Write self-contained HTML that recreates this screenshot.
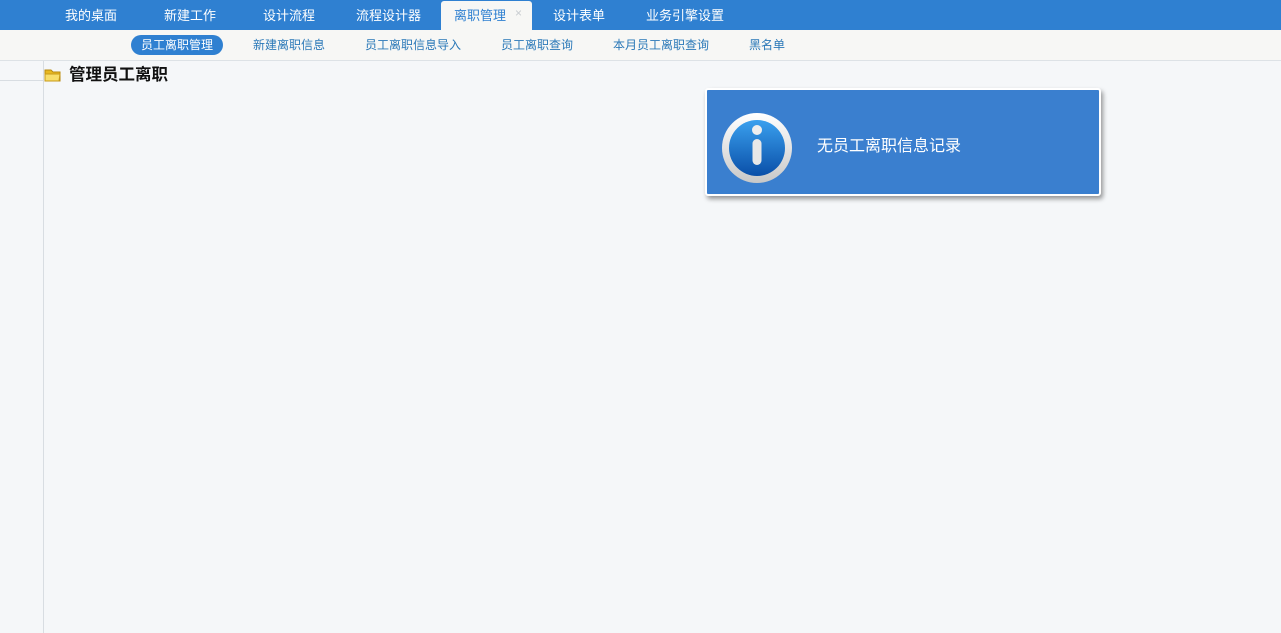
<!DOCTYPE html>
<html><head><meta charset="utf-8"><style>
*{margin:0;padding:0;box-sizing:border-box}
body{width:1281px;height:633px;overflow:hidden;background:#f5f7f9;font-family:"Liberation Sans","Noto Sans CJK SC",sans-serif;position:relative}
.top{position:absolute;left:0;top:0;width:1281px;height:30px;background:#2f80d1}
.top span{position:absolute;top:5px;font-size:13px;color:#fff}
.tab{position:absolute;left:441px;top:1px;width:91px;height:29px;background:#f7f7f5;border-radius:3px 3px 0 0}
.sub{position:absolute;left:0;top:30px;width:1281px;height:31px;background:#f7f7f5;border-bottom:1px solid #dde2e6}
.pill{position:absolute;left:131px;top:35px;width:92px;height:20px;border-radius:10px;background:#2f80d1}
.left{position:absolute;left:0;top:61px;width:44px;height:572px;border-right:1px solid #d8dde2}
.pop{position:absolute;left:705px;top:88px;width:396px;height:108px;background:#3a7fcf;border:2px solid #fff;border-radius:3px;box-shadow:2px 3px 5px rgba(0,0,0,.4)}
</style></head><body>
<div class="top">
<span style="left:65px">我的桌面</span><span style="left:164px">新建工作</span><span style="left:263px">设计流程</span><span style="left:356px">流程设计器</span>
<div class="tab"></div>
<span style="left:454px;color:#2f80d1">离职管理</span><span style="left:515px;color:#c8ccd0;font-size:12px;top:6px">×</span>
<span style="left:553px">设计表单</span><span style="left:646px">业务引擎设置</span>
</div>
<div class="sub"></div>
<div class="pill"></div>
<div style="position:absolute;left:0;top:29px;width:1281px;height:30px">
<span style="position:absolute;left:141px;top:7px;font-size:12px;color:#fff">员工离职管理</span>
<span style="position:absolute;left:253px;top:7px;font-size:12px;color:#2a78b8">新建离职信息</span>
<span style="position:absolute;left:365px;top:7px;font-size:12px;color:#2a78b8">员工离职信息导入</span>
<span style="position:absolute;left:501px;top:7px;font-size:12px;color:#2a78b8">员工离职查询</span>
<span style="position:absolute;left:613px;top:7px;font-size:12px;color:#2a78b8">本月员工离职查询</span>
<span style="position:absolute;left:749px;top:7px;font-size:12px;color:#2a78b8">黑名单</span>
</div>
<div class="left"></div>
<div style="position:absolute;left:0;top:80px;width:43px;height:1px;background:#d8dde2"></div>
<svg style="position:absolute;left:44px;top:67px" width="18" height="16"><path d="M1 3h6l2 2h7v9H1z" fill="#e8b820" stroke="#b88a10"/><path d="M1 7h15l-1 7H1z" fill="#f8de6a" stroke="#c89a18"/></svg>
<div style="position:absolute;left:69px;top:61px;font-size:16.5px;font-weight:bold;color:#111">管理员工离职</div>
<div class="pop">
<svg style="position:absolute;left:14px;top:22px" width="72" height="72"><defs><linearGradient id="g" x1="0" y1="0" x2="0" y2="1"><stop offset="0" stop-color="#3aa0ee"/><stop offset="1" stop-color="#0a4fa8"/></linearGradient><linearGradient id="r" x1="0" y1="0" x2="0" y2="1"><stop offset="0" stop-color="#fff"/><stop offset="1" stop-color="#c8c8c8"/></linearGradient></defs><circle cx="36" cy="36" r="35" fill="url(#r)"/><circle cx="36" cy="36" r="28" fill="url(#g)"/><circle cx="36" cy="18" r="5" fill="#eee"/><rect x="31.5" y="27" width="9" height="26" rx="4.5" fill="#e8e8e8"/></svg>
<div style="position:absolute;left:110px;top:42px;font-size:16px;color:#fff">无员工离职信息记录</div>
</div>
</body></html>
